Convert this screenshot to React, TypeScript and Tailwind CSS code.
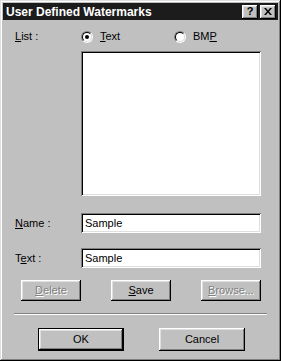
import React from 'react';

const raised =
  'shadow-[inset_-1px_-1px_0_#000,inset_1px_1px_0_#fff,inset_-2px_-2px_0_#808080,inset_2px_2px_0_#dfdfdf]';
const sunken =
  'shadow-[inset_1px_1px_0_#808080,inset_-1px_-1px_0_#fff,inset_2px_2px_0_#000,inset_-2px_-2px_0_#dfdfdf]';

function Radio({ checked, label, hotkey }: { checked?: boolean; label: string; hotkey: number }) {
  return (
    <div className="flex items-center gap-[7px]">
      <span className="w-[12px] h-[12px] rounded-full border border-t-[#808080] border-l-[#808080] border-b-white border-r-white flex">
        <span className="flex-1 rounded-full border border-t-black border-l-black border-b-[#dfdfdf] border-r-[#dfdfdf] bg-white flex items-center justify-center">
          {checked && <span className="w-[4px] h-[4px] rounded-full bg-black" />}
        </span>
      </span>
      <span>
        {label.slice(0, hotkey)}
        <u>{label[hotkey]}</u>
        {label.slice(hotkey + 1)}
      </span>
    </div>
  );
}

function Btn({ label, hotkey, disabled, wide, def }: { label: string; hotkey?: number; disabled?: boolean; wide?: boolean; def?: boolean }) {
  const text =
    hotkey === undefined ? (
      label
    ) : (
      <>
        {label.slice(0, hotkey)}
        <u>{label[hotkey]}</u>
        {label.slice(hotkey + 1)}
      </>
    );
  return (
    <div className={`${wide ? 'w-[86px] h-[23px]' : 'w-[60px] h-[21px]'} ${def ? 'border border-black' : ''} flex`}>
      <div
        className={`flex-1 flex items-center justify-center ${raised} ${
          disabled ? 'text-[#808080] [text-shadow:1px_1px_0_#fff]' : 'text-black'
        }`}
      >
        {text}
      </div>
    </div>
  );
}

function Field({ label, hotkey }: { label: string; hotkey: number }) {
  return (
    <div className="flex items-center">
      <div className="w-[78px] pl-[12px]">
        {label.slice(0, hotkey)}
        <u>{label[hotkey]}</u>
        {label.slice(hotkey + 1)}
      </div>
      <div className={`w-[180px] h-[20px] bg-white ${sunken} flex items-center pl-[4px]`}>Sample</div>
    </div>
  );
}

export default function App() {
  return (
    <div
      className="w-[281px] h-[361px] bg-[#c0c0c0] p-[3px] flex flex-col text-[11px] leading-[13px] text-black shadow-[inset_-1px_-1px_0_#000,inset_1px_1px_0_#dfdfdf,inset_-2px_-2px_0_#808080,inset_2px_2px_0_#fff]"
      style={{ fontFamily: '"Liberation Sans", Arial, sans-serif' }}
    >
      {/* Title bar */}
      <div className="h-[17px] bg-[#1c1c1c] flex items-center justify-between pl-[3px] pr-[2px]">
        <span className="text-white font-bold text-[12px] leading-none">User Defined Watermarks</span>
        <div className="flex gap-[2px]">
          <div className={`w-[16px] h-[14px] bg-[#c0c0c0] ${raised} flex items-center justify-center font-bold text-[11px] leading-none pb-[1px]`}>
            ?
          </div>
          <div className={`w-[16px] h-[14px] bg-[#c0c0c0] ${raised} flex items-center justify-center`}>
            <svg width="8" height="7" viewBox="0 0 8 7">
              <path d="M0 0h2l2 2.5L6 0h2L5 3.5 8 7H6L4 4.5 2 7H0l3-3.5z" fill="#000" />
            </svg>
          </div>
        </div>
      </div>

      {/* List */}
      <div className="flex items-center mt-[10px]">
        <div className="w-[78px] pl-[12px]">
          <u>L</u>ist :
        </div>
        <div className="w-[93px]">
          <Radio checked label="Text" hotkey={0} />
        </div>
        <Radio label="BMP" hotkey={2} />
      </div>
      <div className="flex mt-[8px]">
        <div className="w-[78px]" />
        <div className={`w-[180px] h-[145px] bg-white ${sunken}`} />
      </div>

      <div className="mt-[17px] flex flex-col gap-[15px]">
        <Field label="Name :" hotkey={0} />
        <Field label="Text :" hotkey={1} />
      </div>

      <div className="mt-[12px] flex pl-[18px] gap-[30px]">
        <Btn label="Delete" hotkey={0} disabled />
        <Btn label="Save" hotkey={0} />
        <Btn label="Browse..." hotkey={0} disabled />
      </div>

      <div className="mt-[12px] mx-[11px] h-[2px] border-t border-t-[#808080] border-b border-b-white" />

      <div className="mt-[13px] flex pl-[35px] gap-[35px]">
        <Btn label="OK" wide def />
        <Btn label="Cancel" wide />
      </div>
    </div>
  );
}
